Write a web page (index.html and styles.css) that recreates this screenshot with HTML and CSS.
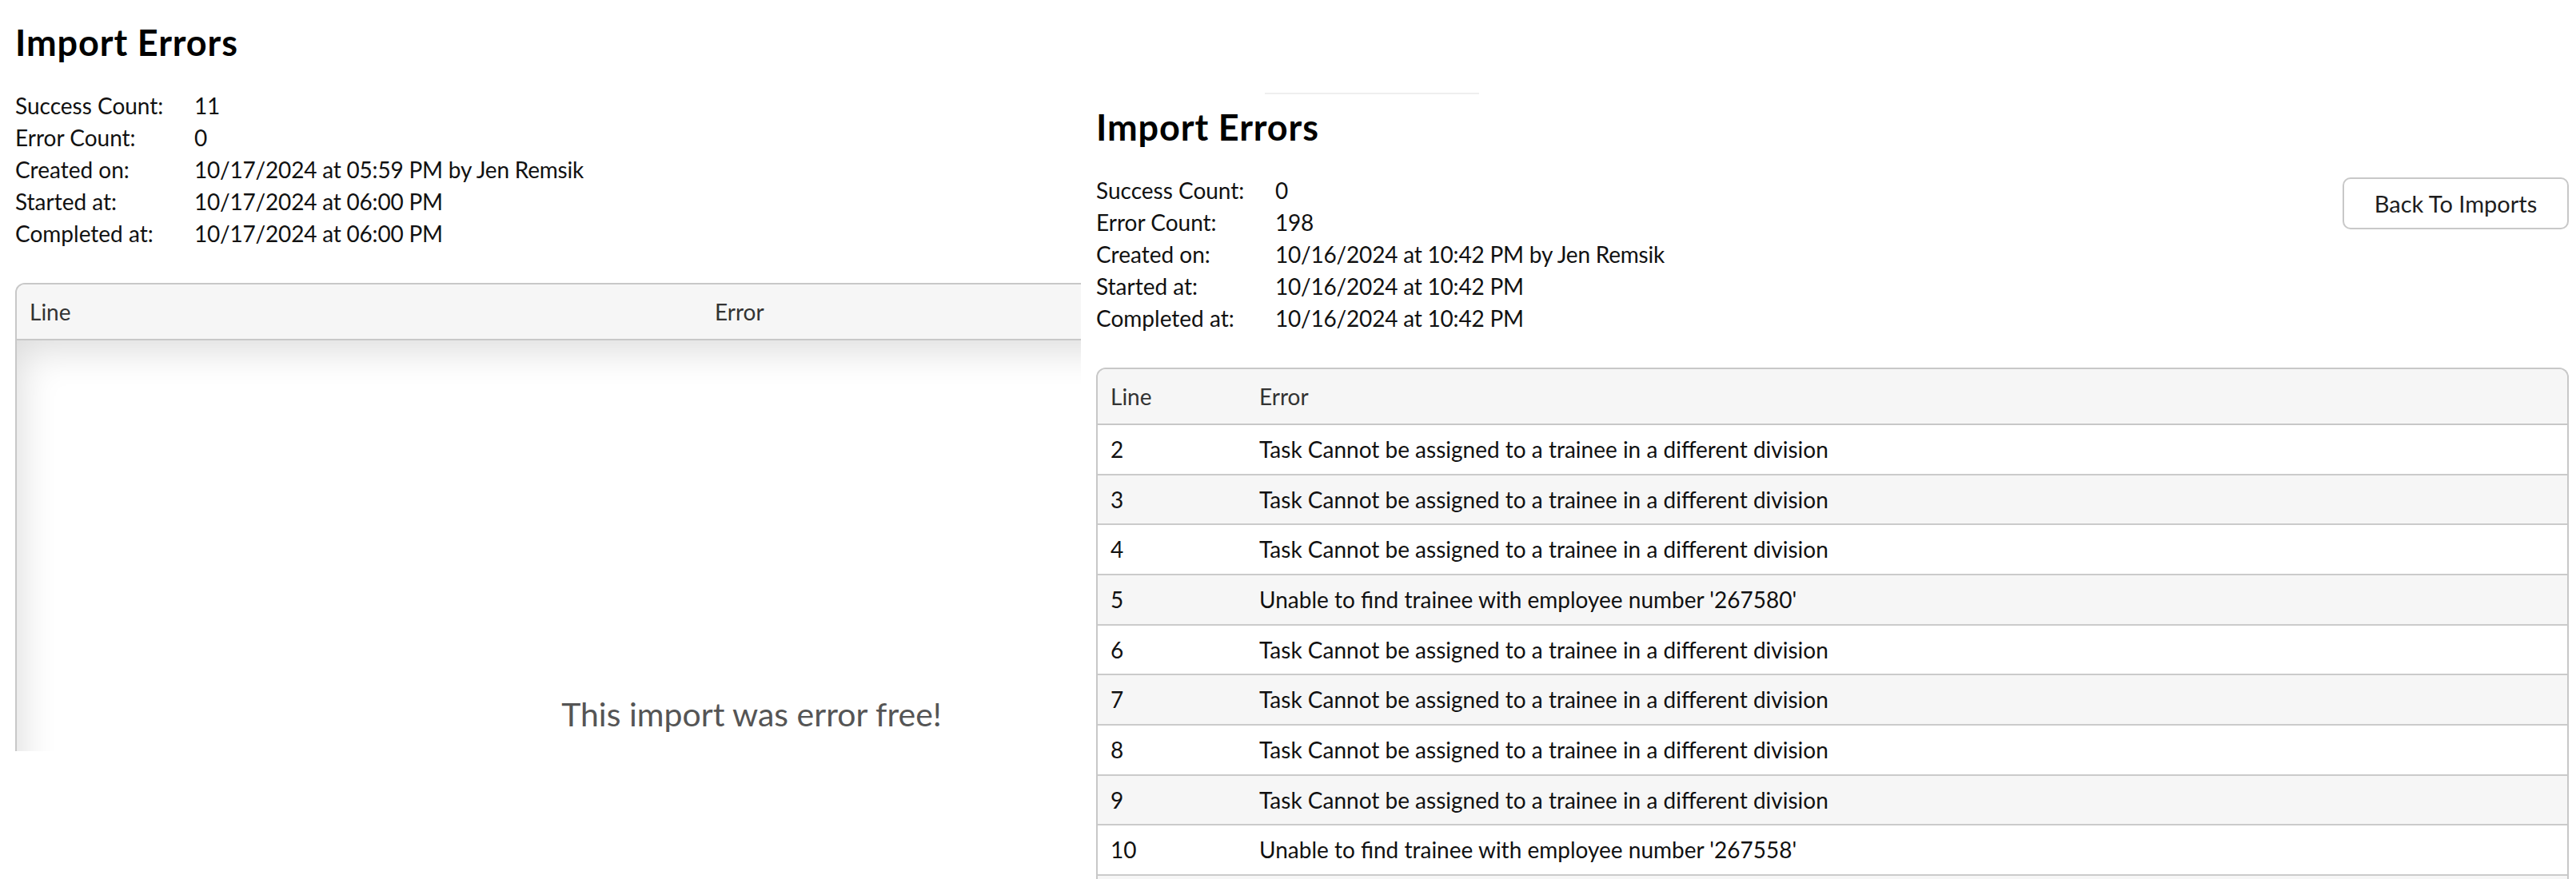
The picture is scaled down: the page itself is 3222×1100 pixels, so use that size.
FILE: index.html
```html
<!DOCTYPE html>
<html lang="en">
<head>
<meta charset="utf-8">
<title>Import Errors</title>
<link rel="stylesheet" href="styles.css">
</head>
<body>
<div class="screens">
  <section class="panel panel-a">
    <div class="sheet">
      <h1 class="title">Import Errors</h1>
      <div class="summary">
        <dl class="meta">
          <div class="meta-row"><dt>Success Count:</dt><dd>11</dd></div>
          <div class="meta-row"><dt>Error Count:</dt><dd>0</dd></div>
          <div class="meta-row"><dt>Created on:</dt><dd>10/17/2024 at 05:59 PM by Jen Remsik</dd></div>
          <div class="meta-row"><dt>Started at:</dt><dd>10/17/2024 at 06:00 PM</dd></div>
          <div class="meta-row"><dt>Completed at:</dt><dd>10/17/2024 at 06:00 PM</dd></div>
        </dl>
      </div>
      <div class="grid-box">
        <table class="errors errors-empty">
          <colgroup><col class="c-line"><col></colgroup>
          <thead><tr><th>Line</th><th>Error</th></tr></thead>
          <tbody>
            <tr><td colspan="2" class="empty">This import was error free!</td></tr>
          </tbody>
        </table>
      </div>
    </div>
  </section>

  <section class="panel panel-b">
    <div class="sheet">
      <div class="tab-rule"></div>
      <h1 class="title">Import Errors</h1>
      <div class="summary">
        <dl class="meta">
          <div class="meta-row"><dt>Success Count:</dt><dd>0</dd></div>
          <div class="meta-row"><dt>Error Count:</dt><dd>198</dd></div>
          <div class="meta-row"><dt>Created on:</dt><dd>10/16/2024 at 10:42 PM by Jen Remsik</dd></div>
          <div class="meta-row"><dt>Started at:</dt><dd>10/16/2024 at 10:42 PM</dd></div>
          <div class="meta-row"><dt>Completed at:</dt><dd>10/16/2024 at 10:42 PM</dd></div>
        </dl>
        <button class="back-btn" type="button">Back To Imports</button>
      </div>
      <div class="grid-box">
        <table class="errors errors-list">
          <colgroup><col class="c-line"><col></colgroup>
          <thead><tr><th>Line</th><th>Error</th></tr></thead>
          <tbody>
            <tr><td>2</td><td>Task Cannot be assigned to a trainee in a different division</td></tr>
            <tr><td>3</td><td>Task Cannot be assigned to a trainee in a different division</td></tr>
            <tr><td>4</td><td>Task Cannot be assigned to a trainee in a different division</td></tr>
            <tr><td>5</td><td>Unable to find trainee with employee number '267580'</td></tr>
            <tr><td>6</td><td>Task Cannot be assigned to a trainee in a different division</td></tr>
            <tr><td>7</td><td>Task Cannot be assigned to a trainee in a different division</td></tr>
            <tr><td>8</td><td>Task Cannot be assigned to a trainee in a different division</td></tr>
            <tr><td>9</td><td>Task Cannot be assigned to a trainee in a different division</td></tr>
            <tr><td>10</td><td>Unable to find trainee with employee number '267558'</td></tr>
            <tr class="row-more"><td></td><td></td></tr>
          </tbody>
        </table>
      </div>
    </div>
  </section>
</div>
</body>
</html>
```

FILE: styles.css
```css
html, body {
  margin: 0;
  background: #fff;
}

body {
  font-family: Lato, "Noto Sans", sans-serif;
  color: #111;
  overflow: hidden;
}

.screens {
  display: flex;
  align-items: flex-start;
  width: 3222px;
  height: 1100px;
  overflow: hidden;
}

.panel {
  flex: none;
  box-sizing: border-box;
  overflow: hidden;
}

.panel-a {
  width: 1352px;
  height: 940px;
  padding: 27px 0 0 19px;
}

.panel-b {
  width: 1870px;
  height: 994px;
  margin-top: 106px;
  padding: 10px 9px 0 19px;
}

.sheet {
  width: 1842px;
}

.tab-rule {
  width: 268px;
  height: 2px;
  margin: 0 0 15px 211px;
  background: #efefef;
}

.title {
  margin: 0;
  font-size: 45px;
  line-height: 52px;
  font-weight: 700;
  letter-spacing: 0.9px;
  color: #000;
}

.summary {
  display: flex;
  justify-content: space-between;
  align-items: flex-start;
  margin-top: 33px;
}

.meta {
  margin: 0;
  font-size: 28px;
  line-height: 40px;
}

.meta-row {
  display: flex;
}

.meta dt {
  width: 224px;
  flex: none;
}

.meta dd {
  margin: 0;
  letter-spacing: -0.2px;
}

.back-btn {
  margin-top: 4px;
  width: 283px;
  height: 65px;
  box-sizing: border-box;
  border: 2px solid #c8c8c8;
  border-radius: 10px;
  background: #fff;
  font-family: Lato, "Noto Sans", sans-serif;
  font-size: 29px;
  color: #1e1e1e;
  padding: 0;
}

.grid-box {
  margin-top: 42px;
  border: 2px solid #c8c8c8;
  border-bottom: none;
  border-radius: 12px 12px 0 0;
  overflow: hidden;
}

.errors {
  width: 100%;
  table-layout: fixed;
  border-collapse: separate;
  border-spacing: 0;
  font-size: 28px;
  line-height: 40px;
}

.errors-empty .c-line { width: 857px; }
.errors-list .c-line { width: 186px; }

.errors th {
  text-align: left;
  font-weight: 400;
  color: #333;
  background: #f6f6f6;
  padding: 14px 16px;
  border-bottom: 2px solid #c8c8c8;
}

.errors td {
  padding: 10px 16px 10.67px;
  color: #111;
  white-space: nowrap;
}

.errors-list tbody tr + tr td {
  border-top: 2px solid #cbcbcb;
}

.errors-list tbody tr:nth-child(even) td {
  background: #f6f6f6;
}

.errors-list .row-more td {
  height: 40px;
}

.errors td.empty {
  height: 800px;
  vertical-align: top;
  text-align: center;
  padding: 444px 0 0;
  font-size: 41px;
  line-height: 48px;
  color: #555;
  box-shadow: inset 12px 20px 48px -8px rgba(0, 0, 0, 0.14);
}
```
